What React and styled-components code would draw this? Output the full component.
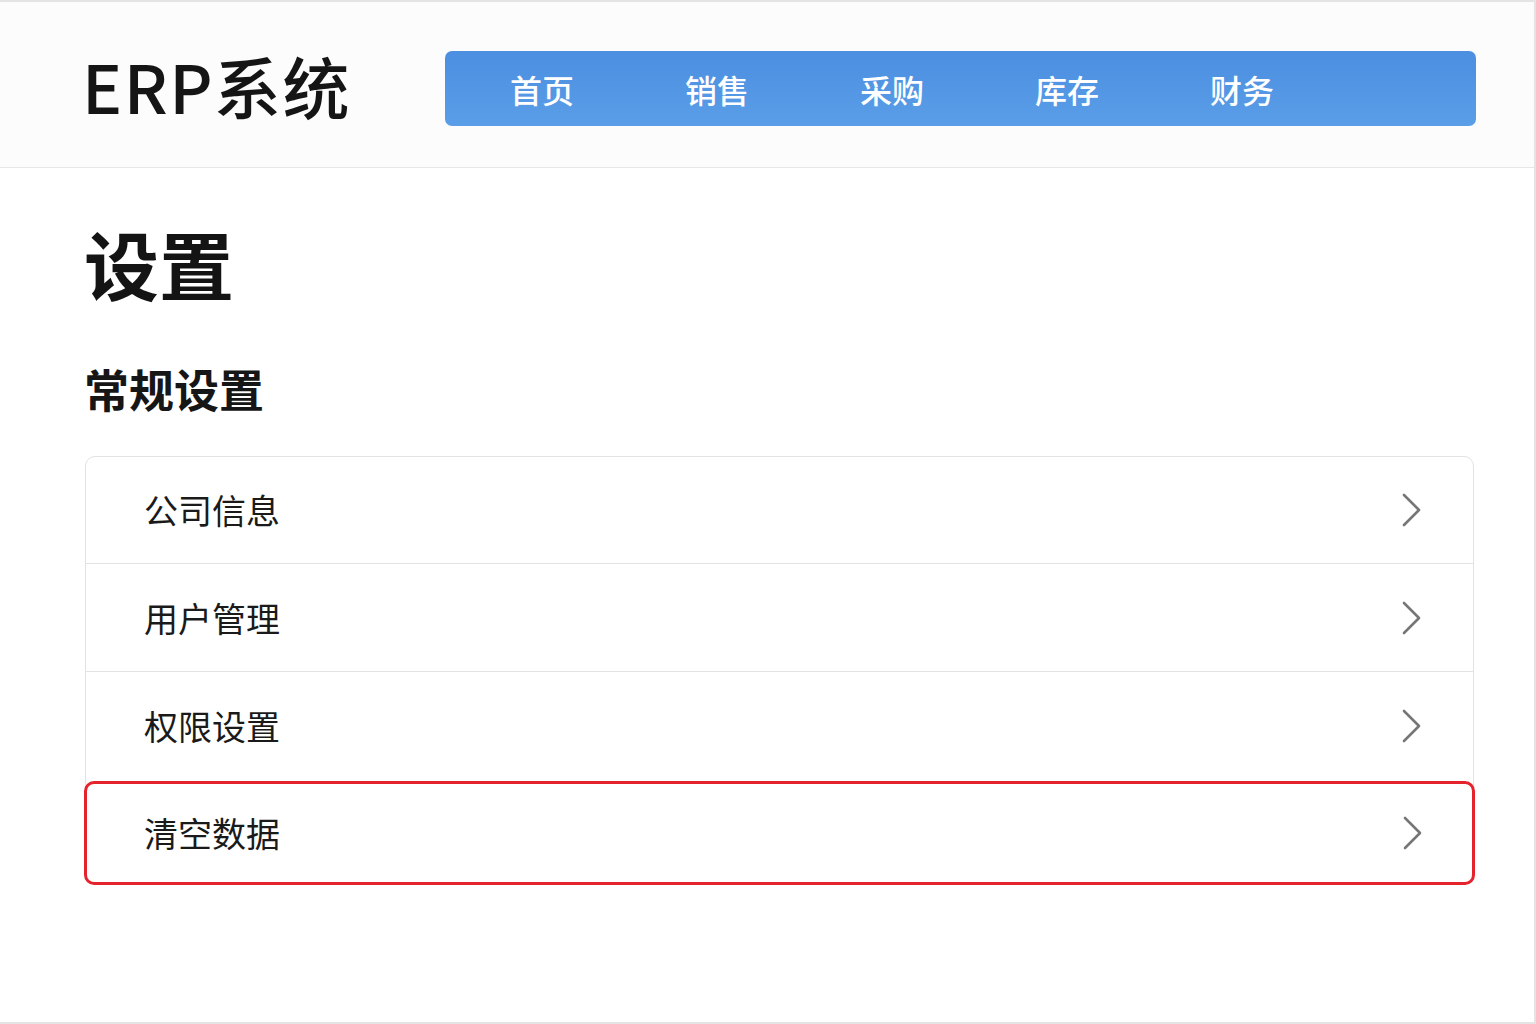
import React from "react";
import styled, { createGlobalStyle } from "styled-components";

const Global = createGlobalStyle`
  html, body { margin: 0; padding: 0; background: #ffffff; }
  body { font-family: "Noto Sans CJK SC", "Noto Sans", sans-serif; color: #161616; }
  * { box-sizing: border-box; }
`;

const Frame = styled.div`
  width: 1536px;
  height: 1024px;
  border-top: 2px solid #e4e4e4;
  border-right: 2px solid #e4e4e4;
  border-bottom: 2px solid #e4e4e4;
  background: #ffffff;
  display: flex;
  flex-direction: column;
`;

const Header = styled.header`
  height: 166px;
  flex-shrink: 0;
  background: #fcfcfc;
  border-bottom: 1px solid #e6e6e6;
  display: flex;
  align-items: center;
  padding: 0 58px 0 82px;
`;

const Logo = styled.div`
  width: 363px;
  flex-shrink: 0;
  font-size: 67px;
  font-weight: 500;
  line-height: 1;
  letter-spacing: 1.5px;
  color: #151515;
  white-space: nowrap;
`;

const Nav = styled.nav`
  flex: 1;
  height: 75px;
  margin-top: 8px;
  border-radius: 7px;
  background: linear-gradient(180deg, #4c8ee0 0%, #5a9ee8 100%);
  display: flex;
  align-items: center;
  padding-left: 65px;
  gap: 111px;
`;

const NavItem = styled.a`
  font-size: 32px;
  font-weight: 500;
  color: #ffffff;
  line-height: 1;
  text-decoration: none;
  white-space: nowrap;
`;

const Main = styled.main`
  padding: 57px 60px 0 84px;
  display: flex;
  flex-direction: column;
`;

const Title = styled.h1`
  margin: 0;
  font-size: 75px;
  font-weight: 700;
  line-height: 1;
  color: #141414;
`;

const SectionTitle = styled.h2`
  margin: 66px 0 0 0;
  font-size: 45px;
  font-weight: 700;
  line-height: 1;
  color: #161616;
`;

const Card = styled.div`
  margin-top: 45px;
  margin-left: 1px;
  border: 1px solid #e2e2e2;
  border-radius: 10px;
  background: #ffffff;
  display: flex;
  flex-direction: column;
`;

const Row = styled.div`
  height: ${p => (p.$first ? "106px" : p.$danger ? "104px" : "108px")};
  display: flex;
  align-items: center;
  justify-content: space-between;
  padding: 0 50px 0 ${p => (p.$danger ? "57px" : "58px")};
  border-top: ${p => (p.$first ? "none" : "1px solid #e3e3e3")};
  ${p =>
    p.$danger &&
    `
    border: 3px solid #e5232d;
    border-radius: 10px;
    margin: 2px -2px -2px -2px;
    padding-right: 48px;
  `}
`;

const RowLabel = styled.span`
  font-size: 34px;
  font-weight: 400;
  line-height: 1;
  color: #1a1a1a;
`;

const Chevron = () => (
  <svg width="22" height="34" viewBox="0 0 22 34" fill="none">
    <path d="M3 2 L18 17 L3 32" stroke="#767676" strokeWidth="2.6" strokeLinecap="round" strokeLinejoin="round" />
  </svg>
);

const navItems = ["首页", "销售", "采购", "库存", "财务"];
const rows = ["公司信息", "用户管理", "权限设置", "清空数据"];

export default function App() {
  return (
    <>
      <Global />
      <Frame>
        <Header>
          <Logo>ERP系统</Logo>
          <Nav>
            {navItems.map(n => (
              <NavItem key={n}>{n}</NavItem>
            ))}
          </Nav>
        </Header>
        <Main>
          <Title>设置</Title>
          <SectionTitle>常规设置</SectionTitle>
          <Card>
            {rows.map((r, i) => (
              <Row key={r} $first={i === 0} $danger={i === rows.length - 1}>
                <RowLabel>{r}</RowLabel>
                <Chevron />
              </Row>
            ))}
          </Card>
        </Main>
      </Frame>
    </>
  );
}
